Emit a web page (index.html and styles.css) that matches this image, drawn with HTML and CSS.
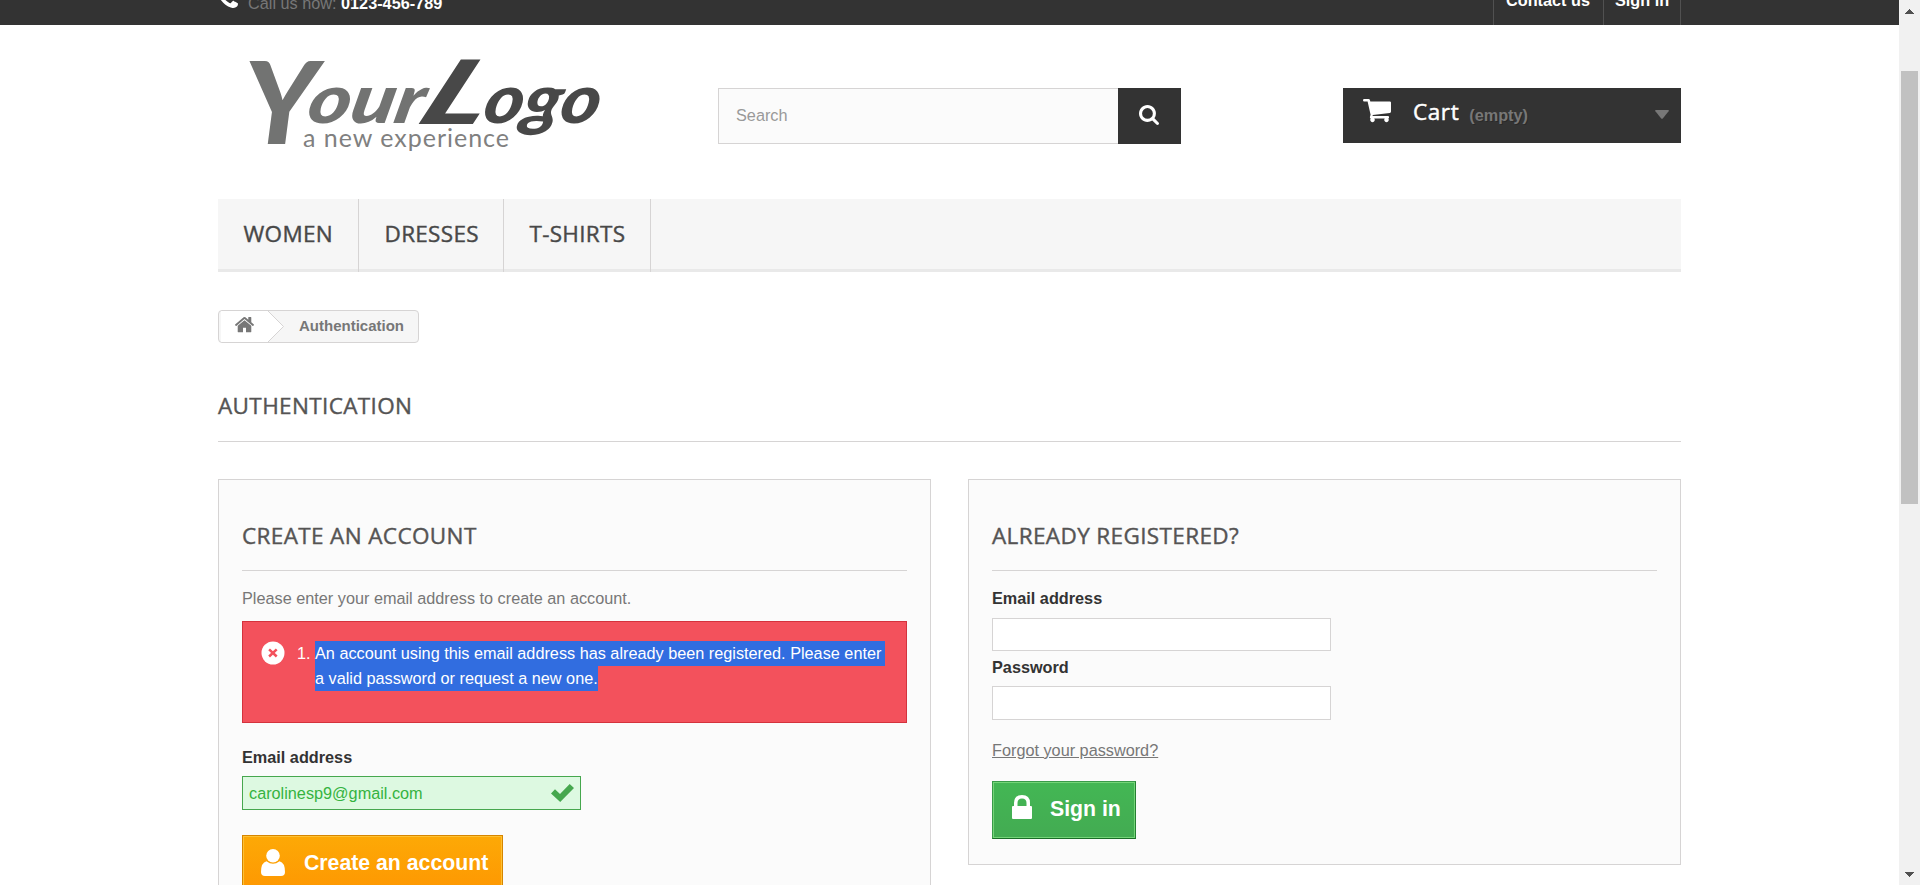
FILE: index.html
```html
<!DOCTYPE html>
<html lang="en">
<head>
<meta charset="utf-8">
<title>Login - My Store</title>
<link rel="stylesheet" href="styles.css">
</head>
<body>
<div class="viewport">
<div class="page">
  <div class="topbar">
    <div class="container topbar-row">
      <div class="phone">
        <svg class="phone-icon" viewBox="0 128 1408 1408"><path d="M1408 1240q0 27-10 70.500t-21 68.500q-21 50-122 106-94 51-186 51-27 0-53-3.500t-57.500-12.500-47-14.500T856 1485t-49-18q-98-35-175-83-127-79-264-216T152 904q-48-77-83-175-3-9-18-49t-20.500-55.500T16 577.500 3.500 520 0 467q0-92 51-186 56-101 106-122 25-11 68.500-21t70.500-10q14 0 21 3 18 6 53 76 11 19 30 54t35 63.500 31 53.500q3 4 17.500 25t21.500 35.500 7 28.500q0 20-28.500 50t-62 55-62 53-28.500 46q0 9 5 22.500t8.500 20.500 14 24 11.500 19q76 137 174 235t235 174q2 1 19 11.500t24 14 20.500 8.500 22.500 5q18 0 46-28.500t53-62 55-62 50-28.500q14 0 28.500 7t35.500 21.500 25 17.500q25 15 53.500 31t63.500 35 54 30q70 35 76 53 3 7 3 21z"/></svg>
        <span>Call us now: <strong>0123-456-789</strong></span>
      </div>
      <div class="toplinks"><a class="contact">Contact us</a><a class="login">Sign in</a></div>
    </div>
  </div>

  <header class="container header">
    <svg class="logo" viewBox="0 0 360 100">
      <g class="logo-name">
        <text class="logo-your" transform="translate(-4 88)" font-size="115" textLength="74" lengthAdjust="spacingAndGlyphs">Y</text>
        <text class="logo-your" transform="translate(57 67) skewX(-12)" font-size="68" textLength="116" lengthAdjust="spacingAndGlyphs">our</text>
        <text class="logo-dark" transform="translate(166 68) skewX(-25)" font-size="89" textLength="66" lengthAdjust="spacingAndGlyphs">L</text>
        <text class="logo-dark" transform="translate(233 67) skewX(-12)" font-size="68" textLength="116" lengthAdjust="spacingAndGlyphs">ogo</text>
      </g>
      <text class="logo-tag" x="55" y="91" textLength="206">a new experience</text>
    </svg>
    <form class="search">
      <div class="search-field">Search</div>
      <div class="search-button"><svg viewBox="0 128 1664 1664"><path d="M1152 832q0-185-131.500-316.500T704 384 387.500 515.500 256 832t131.500 316.500T704 1280t316.500-131.500T1152 832zm512 832q0 52-38 90t-90 38q-54 0-90-38l-343-342q-179 124-399 124-143 0-273.500-55.500t-225-150-150-225T0 832t55.500-273.500 150-225 225-150T704 128t273.500 55.500 225 150 150 225T1408 832q0 220-124 399l343 343q37 37 37 90z"/></svg></div>
    </form>
    <div class="cart">
      <svg class="cart-icon" viewBox="0 0 28 24"><path d="M1.200 0H5.500Q6.700 0 7 1.200L7.300 2.400H26.800Q28 2.400 28 3.600V12.500Q28 13.700 26.800 13.900L9.700 16 9.600 17H25Q26 17 26 18V19Q25.900 19.300 25.300 19.400A2.300 2.300 0 1 1 21.700 19.400H11.300A2.300 2.300 0 1 1 7.700 19.400Q6.700 19.300 6.900 18L7.600 15.800 4.600 2.600H1.200Q0 2.600 0 1.300 0 0 1.200 0z"/></svg>
      <span class="cart-title">Cart</span><span class="cart-count">(empty)</span>
      <svg class="cart-arrow" viewBox="0 0 14 9"><path d="M1 0h12q1.500 0 .6 1.300L8 8.200q-1 1-2 0L.4 1.300Q-.5 0 1 0z"/></svg>
    </div>
  </header>

  <nav class="container menu"><a class="m-women">Women</a><a class="m-dresses">Dresses</a><a class="m-shirts">T-shirts</a></nav>

  <main class="container">
    <div class="breadcrumb">
      <svg class="crumb-home" viewBox="0 0 66 31"><path class="crumb-bg" d="M2 0H49L64.500 15.500 49 31H2z"/><path class="crumb-edge" d="M49 0L64.500 15.500 49 31"/>
        <svg x="16" y="6" width="19" height="15.500" viewBox="26 253 1612 1283" preserveAspectRatio="none"><path class="home" d="M1408 992v480q0 26-19 45t-45 19H960v-384H704v384H320q-26 0-45-19t-19-45V992q0-1 .5-3t.5-3l575-474 575 474q1 2 1 6zm223-69l-62 74q-8 9-21 11h-3q-13 0-21-7L832 424 140 1001q-12 8-24 7-13-2-21-11l-62-74q-8-10-7-23.500T37 878l719-599q32-26 76-26t76 26l244 204V288q0-14 9-23t23-9h192q14 0 23 9t9 23v408l219 182q10 8 11 21.500t-7 23.500z"/></svg>
      </svg>
      <span>Authentication</span>
    </div>
    <h1 class="heading page-heading">Authentication</h1>

    <div class="columns">
      <section class="box box-create">
        <h3 class="heading">Create an account</h3>
        <p class="intro">Please enter your email address to create an account.</p>
        <div class="alert">
          <svg class="alert-icon" viewBox="0 0 24 24"><circle cx="12" cy="12" r="11.500"/><path d="M8.100 8.300l7.600 7.200M15.700 8.300l-7.600 7.200"/></svg>
          <span class="alert-num">1.</span>
          <div class="alert-text"><span class="selected first">An account using this email address has already been registered. Please enter</span><span class="selected">a valid password or request a new one.</span></div>
        </div>
        <div class="label">Email address</div>
        <div class="field valid"><span>carolinesp9@gmail.com</span>
          <svg viewBox="0 0 23 18"><path d="M0 9.500L4 5.300l5 4.600L18.700 0 23 4 9.200 18z"/></svg>
        </div>
        <div class="button orange">
          <svg class="user-icon" viewBox="0 0 24 27"><circle cx="12" cy="6.800" r="6.800"/><path d="M5.500 12.200Q12 17.500 18.500 12.200 24 13.500 24 23 24 27 20 27H4Q0 27 0 23 0 13.500 5.500 12.200z"/></svg>
          <span>Create an account</span>
        </div>
      </section>

      <section class="box box-login">
        <h3 class="heading">Already registered?</h3>
        <div class="label">Email address</div>
        <div class="field email"></div>
        <div class="label">Password</div>
        <div class="field password"></div>
        <a class="forgot">Forgot your password?</a>
        <div class="button green">
          <svg class="lock-icon" viewBox="0 0 20 24"><path d="M0 12Q0 11 1 11H2V8Q2 0 10 0T18 8V11H19Q20 11 20 12V23Q20 24 19 24H1Q0 24 0 23zM5.500 11H14.500V8Q14.500 3.500 10 3.500T5.500 8z"/></svg>
          <span>Sign in</span>
        </div>
      </section>
    </div>
  </main>
</div>
<div class="scrollbar">
  <svg class="sb-up" viewBox="0 0 9 5" shape-rendering="crispEdges"><path d="M4 0h1v1h1v1h1v1h1v1h1v1H0V4h1V3h1V2h1V1h1z"/></svg>
  <div class="thumb"></div>
  <svg class="sb-down" viewBox="0 0 9 5" shape-rendering="crispEdges"><path d="M4 5h1V4h1V3h1V2h1V1h1V0H0v1h1v1h1v1h1v1h1z"/></svg>
</div>
</div>
</body>
</html>
```
FILE: styles.css
```css
* { box-sizing: border-box; }
body {
  margin: 0;
  background: #fff;
  color: #777;
  font: 16.25px/22px "Liberation Sans", Arial, sans-serif;
}
svg { display: block; flex: none; }
.viewport { display: flex; height: 885px; overflow: hidden; }
.page { flex: 1; min-width: 0; height: 885px; overflow: hidden; background: #fff; }
.container { width: 1463px; margin: 0 auto; }

/* Dark strip above the header */
.topbar { height: 25px; overflow: hidden; background: #333; }
.topbar-row { display: flex; justify-content: space-between; align-items: flex-end; height: 25px; }
.phone { display: flex; align-items: flex-end; gap: 10px; padding-bottom: 11px; }
.phone-icon { width: 20px; height: 20px; margin-bottom: 6px; fill: #fff; }
.phone strong { color: #fff; }
.toplinks { display: flex; color: #fff; font-weight: bold; }
.toplinks a { height: 45px; padding: 8px 11px 0 12px; border-left: 1px solid #515151; white-space: nowrap; line-height: 24px; }
.toplinks .contact { width: 110px; }
.toplinks .login { width: 78px; padding-right: 0; padding-left: 11px; border-right: 1px solid #515151; }

/* Logo, search and cart */
.header { display: flex; align-items: flex-start; padding: 31px 0 0 30px; height: 174px; }
.logo { width: 360px; height: 100px; overflow: visible; }
.logo-name { font-family: Lato, sans-serif; font-weight: 900; font-style: italic; }
.logo-your { fill: #727372; }
.logo-dark { fill: #484848; }
.logo-tag { fill: #808080; font: 400 25px Lato, sans-serif; }
.search { display: flex; width: 463px; height: 56px; margin: 32px 0 0 110px; }
.search-field { width: 400px; padding: 15px 17px; border: 1px solid #d6d4d4; border-right: 0; background: #fbfbfb; color: #999; }
.search-button { display: flex; align-items: center; justify-content: center; width: 63px; background: #333; }
.search-button svg { width: 20px; height: 20px; fill: #fff; margin: 0 2px 2px 0; }
.cart { display: flex; width: 338px; height: 55px; margin: 32px 0 0 162px; padding: 11px 12px 0 20px; background: #333; text-shadow: 1px 1px rgba(0, 0, 0, .2); }
.cart-icon { width: 28px; height: 24px; fill: #fff; }
.cart-title { margin-left: 22px; color: #fff; font: 400 22.500px/25px "Open Sans", sans-serif; -webkit-text-stroke: .5px; letter-spacing: .6px; }
.cart-count { margin: 5px auto 0 10px; font-weight: bold; color: #777; }
.cart-arrow { width: 14px; height: 9px; margin-top: 11px; fill: #777; }

/* Category menu */
.menu { display: flex; height: 73px; background: linear-gradient(#f6f6f6 70px, #e9e9e9 70px); }
.menu a { padding-left: 25.500px; border-right: 1px solid #d6d4d4; color: #484848; font: 400 22.500px/69px "Open Sans", sans-serif; -webkit-text-stroke: .4px; letter-spacing: .3px; text-transform: uppercase; white-space: nowrap; }
.m-women { width: 141px; }
.m-dresses { width: 145px; }
.m-shirts { width: 147px; }

.breadcrumb { display: flex; width: 201px; height: 33px; margin-top: 38px; border: 1px solid #d6d4d4; border-radius: 4px; background: #f6f6f6; overflow: hidden; font-size: 15px; font-weight: bold; line-height: 30px; }
.breadcrumb span { margin-left: 14px; }
.crumb-home { width: 66px; height: 31px; }
.crumb-bg { fill: #fff; }
.crumb-edge { fill: none; stroke: #d6d4d4; }
.home { fill: #777; }

.heading { margin: 0; border-bottom: 1px solid #d6d4d4; color: #555454; font: 400 22.500px/27px "Open Sans", sans-serif; -webkit-text-stroke: .4px; letter-spacing: .37px; text-transform: uppercase; }
.page-heading { height: 50px; margin-top: 49px; }
.columns { display: flex; gap: 37px; align-items: flex-start; padding-top: 37px; }
.box { width: 713px; height: 386px; padding: 42px 23px 0; border: 1px solid #d6d4d4; background: #fbfbfb; }
.box-create { height: 480px; }
.box .heading { height: 49px; margin-bottom: 16px; }
.intro { margin: 0 0 12px; }
.label { color: #333; font-weight: bold; }

.alert { display: flex; height: 102px; margin-bottom: 23px; padding: 19px 18px; border: 1px solid #d4323d; background: #f3515c; color: #fff; line-height: 25px; }
.alert-icon { width: 24px; height: 24px; fill: #fff; }
.alert-icon path { stroke: #f3515c; stroke-width: 2.500; }
.alert-num { margin-left: 12px; width: 18px; }
.alert-text { display: flex; flex-direction: column; align-items: flex-start; }
.selected { background: #316de0; white-space: nowrap; }
.first { padding-right: 4px; }

.field { width: 339px; height: 33px; border: 1px solid #d6d4d4; background: #fff; }
.valid { display: flex; align-items: center; justify-content: space-between; height: 34px; margin-top: 8px; padding: 0 6px; border-color: #46a74e; background: #ddf9e1; color: #35b33f; }
.valid svg { width: 23px; height: 18px; fill: #46a74e; }
.email { margin: 9px 0 5px; }
.password { height: 34px; margin: 8px 0 19px; }
.forgot { display: block; width: max-content; text-decoration: underline; }

.button { display: flex; color: #fff; font-size: 21.250px; font-weight: bold; line-height: 54px; white-space: nowrap; }
.orange { width: 261px; height: 58px; margin-top: 25px; padding: 0 0 0 17px; border: 1px solid #d68500; background: linear-gradient(#fda906, #fe9702); box-shadow: inset 0 0 0 1px #fec133; }
.user-icon { width: 24px; height: 27px; margin: 13px 19px 0 1px; fill: #fff; }
.green { width: 144px; height: 58px; margin-top: 20px; padding-left: 19px; border: 1px solid #2a8a37; border-color: #399a49 #247f32 #1a6d27 #399a49; background: linear-gradient(#43b754, #43ab52); box-shadow: inset 0 0 0 1px #74d578; }
.lock-icon { width: 20px; height: 24px; margin: 13px 18px 0 0; fill: #fff; }

/* Window scrollbar */
.scrollbar { display: flex; flex-direction: column; align-items: center; width: 21px; height: 885px; padding: 9px 2px 8px 2px; background: #f1f1f1; }
.scrollbar svg { width: 9px; height: 5px; fill: #505050; }
.thumb { width: 17px; height: 433px; margin: 57px 0 auto; background: #c1c1c1; }
```
